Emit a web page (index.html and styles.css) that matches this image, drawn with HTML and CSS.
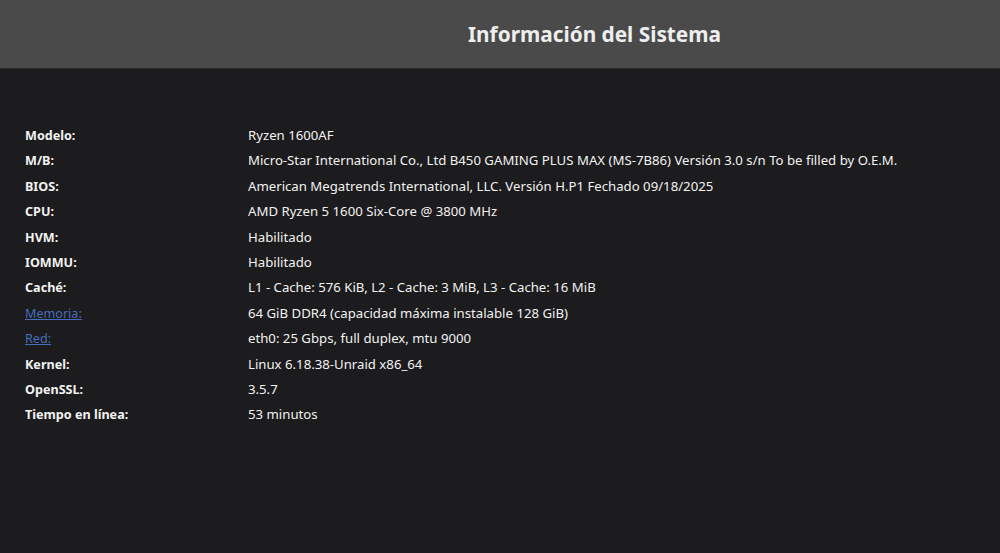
FILE: index.html
```html
<!DOCTYPE html>
<html>
<head>
<title>Información del Sistema</title>
<meta name="viewport" content="width=device-width, initial-scale=1">
<link rel="stylesheet" href="styles.css">
</head>
<body>

<div class="title">
	<span>Información del Sistema</span>
</div>

<table class="info">
	<tr><td>Modelo:</td><td>Ryzen 1600AF</td></tr>
	<tr><td>M/B:</td><td>Micro-Star International Co., Ltd B450 GAMING PLUS MAX (MS-7B86) Versión 3.0 s/n To be filled by O.E.M.</td></tr>
	<tr><td>BIOS:</td><td>American Megatrends International, LLC. Versión H.P1 Fechado 09/18/2025</td></tr>
	<tr><td>CPU:</td><td>AMD Ryzen 5 1600 Six-Core @ 3800 MHz</td></tr>
	<tr><td>HVM:</td><td>Habilitado</td></tr>
	<tr><td>IOMMU:</td><td>Habilitado</td></tr>
	<tr><td>Caché:</td><td>L1 - Cache: 576 KiB, L2 - Cache: 3 MiB, L3 - Cache: 16 MiB</td></tr>
	<tr><td><a href="#">Memoria:</a></td><td>64 GiB DDR4 (capacidad máxima instalable 128 GiB)</td></tr>
	<tr><td><a href="#">Red:</a></td><td>eth0: 25 Gbps, full duplex, mtu 9000</td></tr>
	<tr><td>Kernel:</td><td>Linux 6.18.38-Unraid x86_64</td></tr>
	<tr><td>OpenSSL:</td><td>3.5.7</td></tr>
	<tr><td>Tiempo en línea:</td><td>53 minutos</td></tr>
</table>

</body>
</html>
```

FILE: styles.css
```css
html {
	font: 13.2px "Noto Sans", sans-serif;
}
body {
	margin: 0;
	background-color: #1c1b1d;
	color: #f2f2f2;
	height: 553px;
	overflow: hidden;
}

.title {
	height: 68px;
	background-color: #4a4a4a;
	border-bottom: solid 1px #2a2a2a;
	display: flex;
	align-items: center;
	padding-left: 468px;
	font-size: 20.8px;
	font-weight: bold;
	color: #eeeeee;
}

.info {
	margin: 53px 0 0 18px;
	border-collapse: collapse;
}
.info td {
	padding: 4px 7px 0;
	height: 21.4px;
	vertical-align: baseline;
}
.info td:first-child {
	width: 209px;
	font-size: 12.6px;
	font-weight: bold;
}
.info a {
	color: #486dba;
	font-weight: normal;
}
```
